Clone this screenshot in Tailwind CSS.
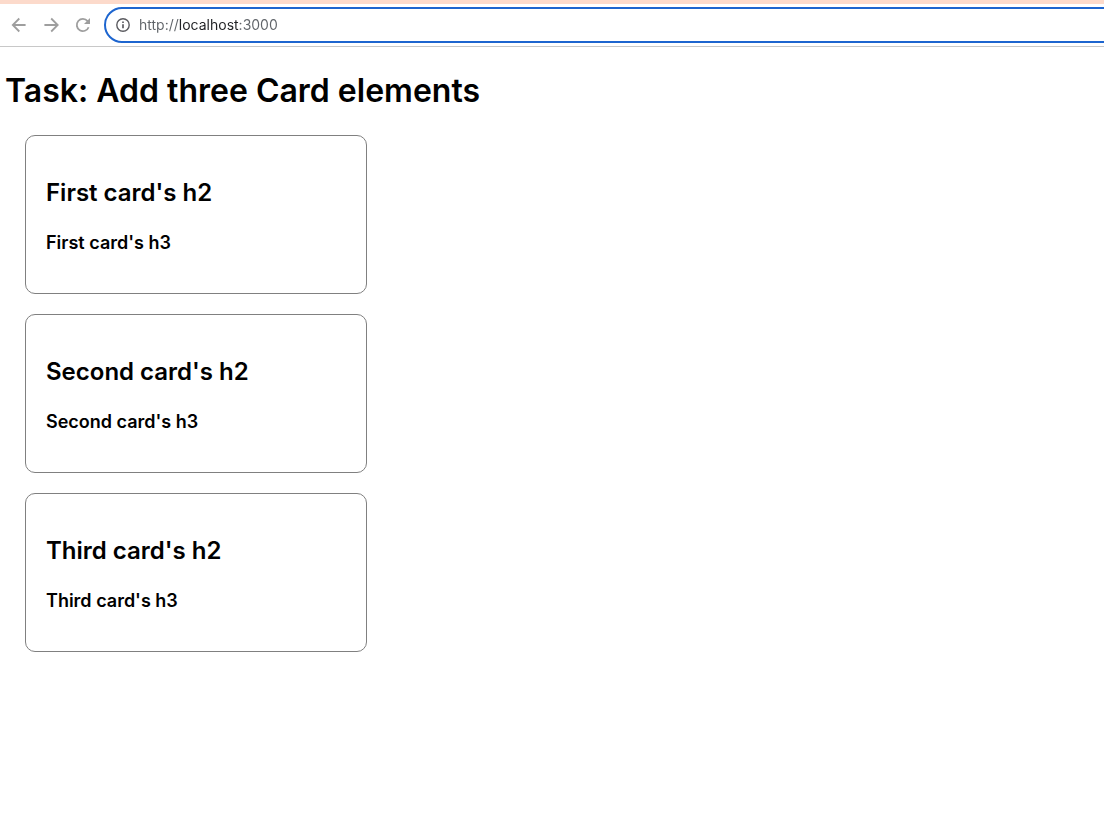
<!DOCTYPE html>
<html lang="en">
<head>
<meta charset="utf-8">
<meta name="viewport" content="width=device-width, initial-scale=1">
<title>Cards</title>
<script src="https://cdn.jsdelivr.net/npm/@tailwindcss/browser@4"></script>
</head>
<body class="min-h-screen bg-white font-['Inter',sans-serif] text-black">
<header class="overflow-hidden border-t-4 border-b border-t-[#fcdacb] border-b-[#c8c8c8] bg-white">
  <nav class="flex items-center pt-[3px] pb-[3px] pl-[9px]" aria-label="Browser">
    <div class="flex shrink-0 gap-3 pr-[11px] text-[#9e9e9e]">
      <button type="button" aria-label="Back"><svg class="size-5" viewBox="0 0 20 20" fill="none" stroke="currentColor" stroke-width="1.8"><path d="M16.600 10H4M10.300 3.500L3.800 10l6.500 6.500"/></svg></button>
      <button type="button" aria-label="Forward"><svg class="size-5" viewBox="0 0 20 20" fill="none" stroke="currentColor" stroke-width="1.8"><path d="M3.400 10h13M10.200 3.500L16.700 10l-6.500 6.500"/></svg></button>
      <button type="button" aria-label="Reload"><svg class="size-5" viewBox="0 0 20 20" fill="none" stroke="currentColor" stroke-width="1.8"><path d="M15.600 12.200A6.100 6.100 0 1 1 14.600 6.100L16 7.600"/><path d="M17 3v6h-6z" fill="currentColor" stroke="none"/></svg></button>
    </div>
    <div class="-mr-5 flex h-9 grow items-center gap-2 rounded-full border-2 border-[#1d65cf] bg-white pl-[9px]">
      <svg class="size-4 shrink-0 text-[#5b5b60]" viewBox="0 0 16 16" fill="none" stroke="currentColor" stroke-width="1.4"><circle cx="8" cy="8" r="6.2"/><path d="M8 7.200v4M8 4.400v1.600" stroke-width="1.7"/></svg>
      <input type="text" aria-label="Address" value="http://localhost:3000" class="min-w-0 grow bg-[linear-gradient(to_right,#5f6368_40px,#202124_40px,#202124_100px,#5f6368_100px)] bg-clip-text text-sm text-transparent caret-black outline-none">
    </div>
  </nav>
</header>
<main class="px-[5px] pt-6">
  <h1 class="text-[32px] leading-10 font-semibold">Task: Add three Card elements</h1>
  <div class="mt-6 ml-5 flex max-w-[342px] flex-col gap-5">
    <section class="rounded-[10px] border border-[#808080] px-5 pt-[41px] pb-[38px]">
      <h2 class="text-2xl font-semibold">First card's h2</h2>
      <h3 class="mt-[22px] text-lg leading-6 font-semibold">First card's h3</h3>
    </section>
    <section class="rounded-[10px] border border-[#808080] px-5 pt-[41px] pb-[38px]">
      <h2 class="text-2xl font-semibold">Second card's h2</h2>
      <h3 class="mt-[22px] text-lg leading-6 font-semibold">Second card's h3</h3>
    </section>
    <section class="rounded-[10px] border border-[#808080] px-5 pt-[41px] pb-[38px]">
      <h2 class="text-2xl font-semibold">Third card's h2</h2>
      <h3 class="mt-[22px] text-lg leading-6 font-semibold">Third card's h3</h3>
    </section>
  </div>
</main>
</body>
</html>
